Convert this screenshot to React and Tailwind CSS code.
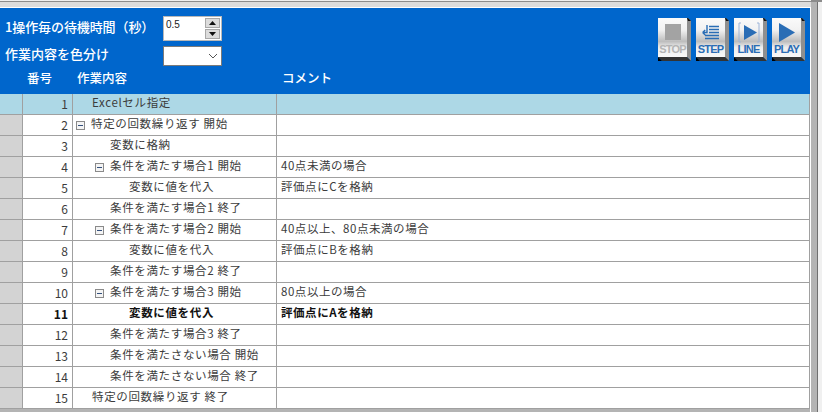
const rows = [
  { no: 1, text: 'Excelセル指定', indent: 'pl-[19px]', selected: true },
  { no: 2, text: '特定の回数繰り返す 開始', indent: 'pl-[3px]', tree: true },
  { no: 3, text: '変数に格納', indent: 'pl-[37px]' },
  { no: 4, text: '条件を満たす場合1 開始', indent: 'pl-[22px]', tree: true, comment: '40点未満の場合' },
  { no: 5, text: '変数に値を代入', indent: 'pl-[56px]', comment: '評価点にCを格納' },
  { no: 6, text: '条件を満たす場合1 終了', indent: 'pl-[37px]' },
  { no: 7, text: '条件を満たす場合2 開始', indent: 'pl-[22px]', tree: true, comment: '40点以上、80点未満の場合' },
  { no: 8, text: '変数に値を代入', indent: 'pl-[56px]', comment: '評価点にBを格納' },
  { no: 9, text: '条件を満たす場合2 終了', indent: 'pl-[37px]' },
  { no: 10, text: '条件を満たす場合3 開始', indent: 'pl-[22px]', tree: true, comment: '80点以上の場合' },
  { no: 11, text: '変数に値を代入', indent: 'pl-[56px]', comment: '評価点にAを格納', bold: true },
  { no: 12, text: '条件を満たす場合3 終了', indent: 'pl-[37px]' },
  { no: 13, text: '条件を満たさない場合 開始', indent: 'pl-[37px]' },
  { no: 14, text: '条件を満たさない場合 終了', indent: 'pl-[37px]' },
  { no: 15, text: '特定の回数繰り返す 終了', indent: 'pl-[19px]' },
]

function TreeIcon() {
  return (
    <svg width="9" height="9" viewBox="0 0 9 9" className="mr-[6px] shrink-0">
      <rect x="0.5" y="0.5" width="8" height="8" fill="#f4f4f4" stroke="#8a8a8a" />
      <path d="M2 4.5h5" stroke="#34507c" />
    </svg>
  )
}

function ToolButton({ label, color, children }) {
  return (
    <div className="relative w-[33px] h-[43px] flex flex-col items-center">
      {/* bevel */}
      <svg width="33" height="43" viewBox="0 0 33 43" className="absolute inset-0">
        <defs>
          <linearGradient id="face" x1="0" y1="0" x2="0" y2="1">
            <stop offset="0" stopColor="#fafafa" />
            <stop offset="0.3" stopColor="#f2f2f2" />
            <stop offset="0.6" stopColor="#bdbdbd" />
            <stop offset="0.75" stopColor="#ededed" />
            <stop offset="1" stopColor="#f8f8f8" />
          </linearGradient>
        </defs>
        <rect width="29" height="39" fill="url(#face)" />
        <path d="M29 0h1l3 3v40l-4-4z" fill="#8f8f8f" />
        <path d="M29 0h1l3 3h-3z" fill="#111" />
        <path d="M0 39h29l4 4H4z" fill="#333" />
        <path d="M0 39l4 4H0z" fill="#000" />
      </svg>
      <div className="relative w-[29px] self-start h-[22px] mt-[3px] flex items-center justify-center">{children}</div>
      <span className={`relative w-[29px] self-start text-center text-[11px] leading-[12px] font-bold tracking-[-0.8px] font-['Liberation_Sans',sans-serif] ${color}`}>
        {label}
      </span>
    </div>
  )
}

export default function App() {
  return (
    <div className="w-[822px] h-[412px] overflow-hidden flex bg-white font-['Noto_Sans_CJK_JP',sans-serif]">
      <div className="w-[811px] flex flex-col">
        {/* top frame */}
        <div className="h-[1px] bg-[#f0f0f0]" />
        <div className="h-[1px] bg-[#8c8c8c]" />
        <div className="h-[5px] bg-[#dcdcdc]" />
        <div className="h-[1px] bg-white" />

        <div className="flex-1 flex flex-col border-r border-white">
          {/* toolbar */}
          <div className="h-[86px] bg-[#0066cc] text-white flex flex-col">
            <div className="h-[62px] flex justify-between pr-[5px]">
              <div className="pl-[5px] pt-[8px] flex flex-col gap-[5px]">
                <div className="flex items-center h-[25px]">
                  <span className="w-[158px] pb-[4px] text-[13px] font-medium tracking-[-0.1px]">1操作毎の待機時間（秒）</span>
                  <div className="w-[59px] h-[25px] bg-white border border-[#b8b8b8] flex justify-between">
                    <span className="pl-[2px] text-[10px] leading-[16px] text-[#222] font-['Liberation_Sans',sans-serif]">0.5</span>
                    <div className="w-[15px] mr-[1px] my-[1px] flex flex-col gap-[1px] bg-white">
                      <div className="flex-1 bg-[#dcdcdc] border border-[#a8a8a8] flex items-center justify-center">
                        <svg width="7" height="4" viewBox="0 0 7 4"><path d="M3.5 0L7 4H0z" fill="#111" /></svg>
                      </div>
                      <div className="flex-1 bg-[#dcdcdc] border border-[#a8a8a8] flex items-center justify-center">
                        <svg width="7" height="4" viewBox="0 0 7 4"><path d="M0 0h7L3.5 4z" fill="#111" /></svg>
                      </div>
                    </div>
                  </div>
                </div>
                <div className="flex items-center h-[20px]">
                  <span className="w-[158px] pb-[4px] text-[13px] font-medium">作業内容を色分け</span>
                  <div className="w-[59px] h-[20px] bg-white border border-[#7a7a7a] flex items-center justify-end pr-[3px]">
                    <svg width="10" height="6" viewBox="0 0 10 6" fill="none"><path d="M1 1l4 4 4-4" stroke="#555" /></svg>
                  </div>
                </div>
              </div>
              <div className="pt-[10px] flex gap-[5px] h-[70px]">
                <ToolButton label="STOP" color="text-[#b4b4b4]">
                  <div className="w-[16px] h-[16px] bg-[#a3a3a3]" />
                </ToolButton>
                <ToolButton label="STEP" color="text-[#2a6db5]">
                  <svg width="17" height="15" viewBox="0 0 17 15" fill="none" stroke="#2a6db5" strokeWidth="1.4">
                    <path d="M7 1.5h10M7 4.5h10M7 7.5h10M3 10.5h14M3 13.5h14" />
                    <path d="M5 0v7.5H0.7M0.7 7.5l2.5-2.5M0.7 7.5L3.2 10" />
                  </svg>
                </ToolButton>
                <ToolButton label="LINE" color="text-[#2a6db5]">
                  <svg width="22" height="21" viewBox="0 0 22 21" fill="none">
                    <path d="M3 1H1v19h2M19 1h2v19h-2" stroke="#9db4d8" />
                    <path d="M6 3l13 7.5L6 18z" fill="#2a6db5" />
                  </svg>
                </ToolButton>
                <ToolButton label="PLAY" color="text-[#2a6db5]">
                  <svg width="16" height="19" viewBox="0 0 16 19"><path d="M0 0l16 9.5L0 19z" fill="#2a6db5" /></svg>
                </ToolButton>
              </div>
            </div>
            <div className="h-[16px] flex items-center text-[12.5px] font-medium">
              <span className="w-[77px] pl-[27px]">番号</span>
              <span className="w-[205px]">作業内容</span>
              <span>コメント</span>
            </div>
          </div>

          {/* grid */}
          <div className="flex-1 flex flex-col bg-[#b4b4b4]">
            {rows.map(row => (
              <div
                key={row.no}
                className={`h-[21px] flex border-b border-[#a0a0a0] text-[11.5px] text-[#3c3c3c] ${row.selected ? 'bg-[#add8e6]' : 'bg-white'} ${row.bold ? 'font-bold text-[#111]' : ''}`}
              >
                <div className={`w-[23px] border-r border-[#a0a0a0] ${row.selected ? '' : 'bg-[#d3d3d3]'}`} />
                <div className="w-[50px] border-r border-[#a0a0a0] flex items-center justify-end pr-[4px] text-[12px]">{row.no}</div>
                <div className={`w-[204px] border-r border-[#a0a0a0] flex items-center ${row.indent}`}>
                  {row.tree && <TreeIcon />}
                  <span className="pb-[2px] tracking-[0.65px] whitespace-pre">{row.text}</span>
                </div>
                <div className="flex-1 border-r border-[#a0a0a0] flex items-center pl-[4px] pb-[2px] tracking-[0.55px]">{row.comment}</div>
              </div>
            ))}
          </div>
        </div>
      </div>

      {/* scrollbar */}
      <div className="flex-1 flex flex-col">
        <div className="h-[2px] bg-[#8c8c8c]" />
        <div className="flex-1 flex">
          <div className="w-[6px] bg-[#b4b4b4]" />
          <div className="w-[1px] bg-[#707070]" />
          <div className="flex-1 bg-[#f0f0f0]" />
        </div>
      </div>
    </div>
  )
}
